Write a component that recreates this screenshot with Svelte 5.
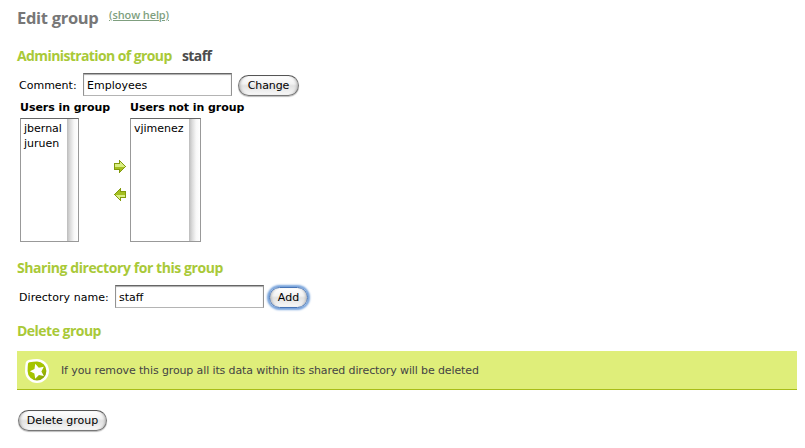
<script>
  let comment = $state('Employees');
  let directory = $state('staff');
  const members = ['jbernal', 'juruen'];
  const others = ['vjimenez'];
</script>

{#snippet arrow(flip)}
  <svg class="arrow" class:flip width="12" height="13" viewBox="0 0 12 13" shape-rendering="crispEdges" aria-hidden="true">
    <path d="M0 3h5V0h1v1h1v1h1v1h1v1h1v1h1v1h1v1h-1v1h-1v1H9v1H8v1H7v1H6v1H5v-3H0z" fill="#829b0c" />
    <path d="M1 4h5V2h1v1h1v1h1v1h1v1h1v.5H1z" fill={flip ? '#a5bf20' : '#d9ee82'} />
    <path d="M1 6.5h10V7h-1v1H9v1H8v1H7v1H6V9H1z" fill={flip ? '#d9ee82' : '#a5bf20'} />
  </svg>
{/snippet}

{#snippet list(users, width)}
  <div class="list" style:width="{width}px">
    <ul>
      {#each users as user}<li>{user}</li>{/each}
    </ul>
    <div class="track"></div>
  </div>
{/snippet}

<main>
  <header>
    <h1>Edit group</h1>
    <a href="#help">(show help)</a>
  </header>

  <h2 class="admin"><span class="t1">Administration of group</span><span class="name">staff</span></h2>
  <div class="row">
    <label for="comment" class="l1">Comment:</label>
    <input id="comment" bind:value={comment} />
    <button class="change">Change</button>
  </div>

  <div class="groups">
    <section class="in">
      <h3>Users in group</h3>
      {@render list(members, 59)}
    </section>
    <div class="moves">
      {@render arrow(false)}
      {@render arrow(true)}
    </div>
    <section>
      <h3>Users not in group</h3>
      {@render list(others, 71)}
    </section>
  </div>

  <h2 class="sharing"><span class="t2">Sharing directory for this group</span></h2>
  <div class="row">
    <label for="directory" class="l2">Directory name:</label>
    <input id="directory" bind:value={directory} />
    <button class="add">Add</button>
  </div>

  <h2 class="delete"><span class="t3">Delete group</span></h2>
  <div class="notice">
    <svg width="24" height="24" viewBox="0 0 24 24" aria-hidden="true">
      <defs>
        <linearGradient id="badge" x1="0" y1="0" x2="1" y2="1">
          <stop offset=".55" stop-color="#a5c400" />
          <stop offset=".9" stop-color="#86a008" />
        </linearGradient>
      </defs>
      <path d="M3.5 1Q8 0 12 0A12 12 0 1 1 0 12Q0 7 .8 3.5Q1.3 1.5 3.5 1z" fill="#fff" />
      <path d="M4.500 3.200Q8.500 2.600 12 2.600A9.400 9.400 0 1 1 2.600 12Q2.600 8 3 4.800Q3.300 3.500 4.500 3.200z" fill="url(#badge)" />
      <path d="M10.200 4.800l3.600 3.900 5-1-2.400 4.700 2.500 4.500-5-.8-3.700 3.600-.8-5.100-4.500-2.400 4.600-2.300z" fill="#fff" />
    </svg>
    <p>If you remove this group all its data within its shared directory will be deleted</p>
  </div>
  <button class="remove">Delete group</button>
</main>

<style>
  :global(body) { background: #fff; }
  main {
    box-sizing: border-box;
    width: 805px;
    height: 448px;
    padding: 0 8px 0 17px;
    overflow: hidden;
    font: 11px/15px "DejaVu Sans", Verdana, sans-serif;
    color: #000;
  }
  h1, h2, h3, p, ul { margin: 0; padding: 0; }
  header { display: flex; height: 44px; align-items: flex-start; }
  h1, h2, header a { font-family: "Trebuchet MS", "Open Sans", sans-serif; white-space: nowrap; }
  h1 { width: 92px; padding-top: 8px; font-size: 16.5px; line-height: 20px; letter-spacing: -0.3px; color: #777; }
  header a { padding-top: 8px; font-size: 11px; font-weight: 600; line-height: 14px; letter-spacing: -0.1px; color: #7f9f7f; }
  h2 { display: flex; box-sizing: border-box; font-size: 14px; font-weight: 700; line-height: 20px; color: #a9c938; letter-spacing: -0.6px; }
  .admin { height: 29px; padding-top: 2px; }
  .t1 { width: 165px; }
  .t2 { letter-spacing: -0.43px; }
  .t3 { letter-spacing: -0.52px; }
  .name { color: #4c4c4c; }
  .row { display: flex; align-items: center; height: 24px; padding-left: 2px; }
  label { white-space: nowrap; }
  .l1 { width: 64px; }
  .l2 { width: 96px; letter-spacing: 0.05px; }
  input {
    box-sizing: border-box;
    width: 149px;
    height: 23px;
    margin: 0 5px 1px 0;
    padding: 2px 3px 0 3px;
    border: 1px solid #b4b4b4;
    border-top: 1px solid #666;
    border-left-color: #929292;
    border-right-color: #929292;
    border-radius: 0;
    outline: 0;
    background: #fff;
    box-shadow: inset 0 1px 1px #aaa;
    font: inherit;
    color: #000;
  }
  button {
    box-sizing: border-box;
    height: 21px;
    margin: 0;
    padding: 0;
    border: 1.5px solid #777;
    border-top-color: #555;
    border-radius: 11px;
    background: linear-gradient(#fff 0%, #f3f3f3 40%, #e2e2e2 52%, #f8f8f8 100%);
    box-shadow: inset 3px 0 3px -2px #aaa, inset -3px 0 3px -2px #aaa, 0 1px 1px #bbb;
    font: inherit;
    line-height: 17px;
    white-space: nowrap;
    color: #000;
  }
  .change { width: 61px; margin-left: 1px; letter-spacing: -0.1px; }
  .add { width: 39px; border-color: #4774b5; box-shadow: 0 0 2px 2px #75a2db, inset 3px 0 3px -2px #aaa, inset -3px 0 3px -2px #aaa; }
  .groups { display: flex; height: 145px; padding-left: 3px; }
  .in { width: 94px; }
  h3 { height: 21px; padding-top: 3px; box-sizing: border-box; font-size: 11px; line-height: 15px; letter-spacing: -0.05px; white-space: nowrap; }
  .moves { display: flex; flex-direction: column; gap: 15px; width: 16px; padding-top: 63px; }
  .arrow { display: block; }
  .flip { transform: scaleX(-1); }
  .list {
    display: flex;
    box-sizing: border-box;
    height: 124px;
    border: 1px solid #999;
    border-top-color: #666;
  }
  ul { flex: 1; padding: 2px 0 0 3px; list-style: none; }
  li { height: 15px; }
  .track { width: 11px; background: linear-gradient(90deg, #bcbcbc, #dcdcdc 30%, #f8f8f8 65%, #fff); }
  .sharing { height: 43px; padding-top: 16px; }
  .delete { height: 42px; padding-top: 12px; }
  .notice {
    display: flex;
    align-items: center;
    box-sizing: border-box;
    height: 39px;
    padding-left: 8px;
    border-bottom: 1px solid #a8bd18;
    background: #dfee7a;
    color: #444;
  }
  .notice svg { display: block; margin-top: 2px; }
  .notice p { margin-left: 12px; white-space: nowrap; letter-spacing: -0.12px; }
  .remove { display: block; width: 89px; height: 21px; margin: 20px 0 0 1px; }
</style>
